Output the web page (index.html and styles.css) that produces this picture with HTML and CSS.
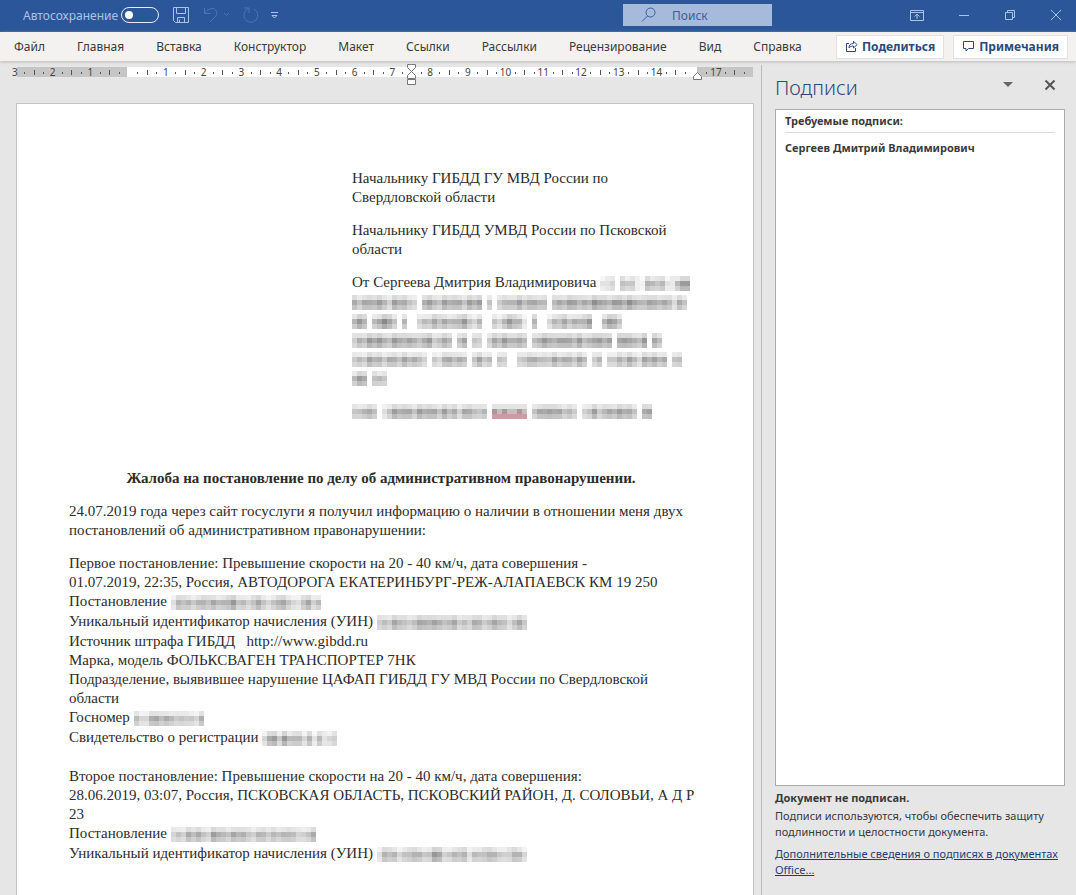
FILE: index.html
```html
<!DOCTYPE html>
<html lang="ru">
<head>
  <meta charset="UTF-8">
  <meta name="viewport" content="width=device-width, initial-scale=1.0">
  <title>Жалоба - Word</title>
  <link rel="stylesheet" href="styles.css">
</head>
<body>
  <header class="titlebar">
    <label class="autosave">Автосохранение <input type="checkbox" class="toggle"></label>
    <div class="quick">
      <button aria-label="Сохранить"><svg width="18" height="18" viewBox="0 0 18 18"><path d="M1.5 1.5h15v15h-13l-2-2zM4.5 1.5v6h9v-6M5.500 16.500v-5h7v5M7.500 16v-2.500"/></svg></button>
      <button class="dim" aria-label="Отменить"><svg width="28" height="18" viewBox="0 0 28 18"><path d="M2.500 2v5.500h6M3 7c3-5 8-5.500 10.500-3 2 2.500 1.500 5-.5 7l-5 5M22 7l2.500 2.500L27 7"/></svg></button>
      <button class="dim" aria-label="Повторить"><svg width="18" height="18" viewBox="0 0 18 18"><path d="M2 2h5v5M6.500 2.500C1 5 .5 12 5 15c4 2.500 9 1 10.500-3.500C16.500 8 15 5 12 3"/></svg></button>
      <button class="more" aria-label="Настройка панели"><svg width="10" height="10" viewBox="0 0 10 10"><path d="M1 2.500h7M2 5.500l2.500 2.500L7 5.500z"/></svg></button>
    </div>
    <label class="search">
      <svg width="18" height="18" viewBox="0 0 18 18"><circle cx="10.500" cy="6.500" r="4.500"/><path d="M7.500 10L2 15.500"/></svg>
      <input type="search" placeholder="Поиск" aria-label="Поиск">
    </label>
    <div class="window-buttons">
      <button aria-label="Параметры ленты"><svg width="14" height="12" viewBox="0 0 14 12"><path d="M.5 1.500h13v10H.5zM.5 3.500h13M7 10V5.500M4.500 7.500L7 5.200l2.500 2.300"/></svg></button>
      <button aria-label="Свернуть"><svg width="12" height="12" viewBox="0 0 12 12"><path d="M1 6.500h10"/></svg></button>
      <button aria-label="Восстановить"><svg width="12" height="12" viewBox="0 0 12 12"><path d="M1.500 3.500h7v7h-7zM3.500 3.500v-2h7v7h-2"/></svg></button>
      <button aria-label="Закрыть"><svg width="12" height="12" viewBox="0 0 12 12"><path d="M1 1l10 10M11 1L1 11"/></svg></button>
    </div>
  </header>

  <nav class="ribbon">
    <div class="tabs">
      <button>Файл</button>
      <button>Главная</button>
      <button>Вставка</button>
      <button>Конструктор</button>
      <button>Макет</button>
      <button>Ссылки</button>
      <button>Рассылки</button>
      <button>Рецензирование</button>
      <button>Вид</button>
      <button>Справка</button>
    </div>
    <div class="actions">
      <button><svg width="13" height="13" viewBox="0 0 13 13"><path d="M4 3.500H1.500v8h9V8M4 8c0-3 1.500-4.500 4.500-4.500V1.200L12 4.700 8.500 8V6C6.500 6 5 6.500 4 8z"/></svg>Поделиться</button>
      <button><svg width="13" height="13" viewBox="0 0 13 13"><path d="M1.500 1.500h10v7h-5L4 11V8.500H1.500z"/></svg>Примечания</button>
    </div>
  </nav>

  <main class="workspace">
    <section class="document">
      <svg class="ruler" id="ruler" width="753" height="24"></svg>
      <article class="page">
        <div class="addressee">
          <p>Начальнику ГИБДД ГУ МВД России по<br>Свердловской области</p>
          <p>Начальнику ГИБДД УМВД России по Псковской<br>области</p>
          <p>От Сергеева Дмитрия Владимировича <span class="mosaic" data-cells="212034301453420566"></span><br>
            <span class="mosaic" data-cells="5465565365543 565465564656 4 3455645654 465664657655765765465564254"></span><br>
            <span class="mosaic" data-cells="564 56754 5  3545365546435  4356452 4  353546546  5654"></span><br>
            <span class="mosaic" data-cells="25465654654653563454 46 32 35465554 4565466546455646 565546 54"></span><br>
            <span class="mosaic" data-cells="354655465465643 4356465 4645 43  34565446565465 35 445465365656 44"></span><br>
            <span class="mosaic" data-cells="565 353"></span></p>
          <p><span class="mosaic" data-cells="34554 246556465564645365435 rstsrsr 465656443 34634656554 56"></span></p>
        </div>
        <h1>Жалоба на постановление по делу об административном правонарушении.</h1>
        <p>24.07.2019 года через сайт госуслуги я получил информацию о наличии в отношении меня двух<br>постановлений об административном правонарушении:</p>
        <div class="ruling">
          <p>Первое постановление: Превышение скорости на 20 - 40 км/ч, дата совершения -<br>01.07.2019, 22:35, Россия, АВТОДОРОГА ЕКАТЕРИНБУРГ-РЕЖ-АЛАПАЕВСК КМ 19 250</p>
          <p class="masked">Постановление <span class="mosaic" data-cells="243545436554645335434454323535"></span></p>
          <p class="masked">Уникальный идентификатор начисления (УИН) <span class="mosaic" data-cells="243543345546534534254345432453"></span></p>
          <p>Источник штрафа ГИБДД &nbsp; http://www.gibdd.ru</p>
          <p>Марка, модель ФОЛЬКСВАГЕН ТРАНСПОРТЕР 7НК</p>
          <p>Подразделение, выявившее нарушение ЦАФАП ГИБДД ГУ МВД России по Свердловской<br>области</p>
          <p class="masked">Госномер <span class="mosaic" data-cells="43356465343435"></span></p>
          <p class="masked">Свидетельство о регистрации <span class="mosaic" data-cells="356465443424132"></span></p>
        </div>
        <div class="ruling">
          <p>Второе постановление: Превышение скорости на 20 - 40 км/ч, дата совершения:<br>28.06.2019, 03:07, Россия, ПСКОВСКАЯ ОБЛАСТЬ, ПСКОВСКИЙ РАЙОН, Д. СОЛОВЬИ, А Д Р<br>23</p>
          <p class="masked">Постановление <span class="mosaic" data-cells="24354543654464533543445442345"></span></p>
          <p class="masked">Уникальный идентификатор начисления (УИН) <span class="mosaic" data-cells="243534345446534534254345432453"></span></p>
        </div>
      </article>
    </section>

    <aside class="pane">
      <div class="pane-head">
        <h2>Подписи</h2>
        <button aria-label="Меню области"><svg width="10" height="6" viewBox="0 0 10 6"><path d="M0 0h10L5 5z" class="solid"/></svg></button>
        <button aria-label="Закрыть область"><svg width="12" height="12" viewBox="0 0 12 12"><path d="M1.500 1.500l9 9M10.500 1.500l-9 9" class="thick"/></svg></button>
      </div>
      <div class="signatures">
        <h3>Требуемые подписи:</h3>
        <p>Сергеев Дмитрий Владимирович</p>
      </div>
      <div class="status">
        <h3>Документ не подписан.</h3>
        <p>Подписи используются, чтобы обеспечить защиту подлинности и целостности документа.</p>
        <a href="#">Дополнительные сведения о подписях в документах Office...</a>
      </div>
    </aside>
  </main>
  <script src="script.js"></script>
</body>
</html>
```
FILE: styles.css
```css
* {
  box-sizing: border-box;
}

body {
  display: flex;
  flex-direction: column;
  height: 100vh;
  margin: 0;
  overflow: hidden;
  background: #e6e6e6;
  color: #3a3a3a;
  font-family: "Noto Sans", "Open Sans", sans-serif;
  font-size: 12px;
}

button {
  padding: 0;
  border: 0;
  background: none;
  color: inherit;
  font: inherit;
}

h1, h2, h3, p {
  margin: 0;
}

svg {
  display: block;
  fill: none;
  stroke: currentColor;
}

/* title bar */
.titlebar {
  display: flex;
  align-items: center;
  flex: none;
  height: 32px;
  padding: 0 14px 2px 23px;
  background: #2b579a;
  color: #a9c4ec;
}

.autosave {
  display: flex;
  align-items: center;
  gap: 3px;
}

.toggle {
  appearance: none;
  display: flex;
  align-items: center;
  width: 38px;
  height: 16px;
  margin: 0;
  padding: 0 3px;
  border: 1px solid #e4eefc;
  border-radius: 8px;
}

.toggle::before {
  content: "";
  width: 8px;
  height: 8px;
  border-radius: 50%;
  background: #fff;
}

.quick {
  display: flex;
  align-items: center;
  gap: 12px;
  margin-left: 13px;
}

.dim {
  color: #4a78bd;
}

.more {
  margin-left: -2px;
}

.search {
  display: flex;
  align-items: center;
  width: 149px;
  height: 22px;
  margin-left: auto;
  padding-left: 17px;
  gap: 14px;
  background: #a6bbdb;
  color: #3a5f9c;
}

.search svg {
  flex: none;
}

.search input {
  width: 80px;
  padding: 0;
  border: 0;
  outline: 0;
  background: none;
  font: inherit;
}

.search input::placeholder {
  color: #3a5f9c;
}

.window-buttons {
  display: flex;
  gap: 34px;
  margin-left: 138px;
}

/* ribbon */
.ribbon {
  display: flex;
  align-items: center;
  justify-content: space-between;
  flex: none;
  height: 29px;
  padding: 0 8px 0 14px;
  background: #f3f2f1;
  box-shadow: 0 1px 3px #bbb;
  z-index: 1;
}

.tabs {
  display: flex;
  gap: 32px;
}

.actions {
  display: flex;
  gap: 9px;
}

.actions button {
  display: flex;
  align-items: center;
  gap: 4px;
  height: 24px;
  padding: 0 8px;
  border: 1px solid #e1e1e1;
  background: #fff;
  color: #2b4a7c;
  font-weight: bold;
}

/* document */
.workspace {
  display: flex;
  flex: 1;
  min-height: 0;
}

.document {
  flex: 1;
  min-width: 0;
  overflow: hidden;
}

.ruler {
  margin-bottom: 18px;
}

.ruler text {
  fill: #444;
  stroke: none;
  font-size: 10px;
  text-anchor: middle;
}

.page {
  height: 100%;
  margin: 0 7px 0 16px;
  padding: 65px 52px 0;
  border: 1px solid #c3c3c3;
  background: #fff;
  color: #2c2c2c;
  font: 15px/19px "Liberation Serif", serif;
  white-space: nowrap;
}

.addressee {
  display: flex;
  flex-direction: column;
  gap: 14px;
  margin-left: 283px;
}

.page h1 {
  margin: 49px 0 14px;
  padding-right: 8px;
  font-size: 15px;
  text-align: center;
}

.ruling {
  margin-top: 14px;
}

.ruling + .ruling {
  margin-top: 20px;
}

.masked {
  margin-bottom: 1px;
}

.mosaic {
  display: inline-block;
  height: 15px;
  vertical-align: -4px;
}

/* signatures pane */
.pane {
  display: flex;
  flex-direction: column;
  flex: none;
  width: 315px;
  margin-top: 4px;
  padding: 10px 11px 17px 13px;
  border-left: 1px solid #bbb;
}

.pane-head {
  display: flex;
  align-items: center;
  gap: 31px;
  height: 34px;
  padding: 0 9px 8px 0;
  color: #555;
}

.pane-head h2 {
  margin-right: auto;
  color: #2b4a7c;
  font: 300 20px/28px "Noto Sans", "Open Sans", sans-serif;
}

.pane-head button {
  margin-bottom: 6px;
}

.solid {
  fill: #666;
  stroke: none;
}

.thick {
  stroke-width: 2;
}

.signatures {
  flex: 1;
  padding: 3px 9px;
  border: 1px solid #ababab;
  background: #fff;
}

.pane h3,
.signatures p {
  font-size: 11px;
  line-height: 16px;
  font-weight: bold;
}

.signatures h3 {
  margin-bottom: 7px;
  padding-bottom: 3px;
  border-bottom: 1px solid #ddd;
}

.status {
  padding-top: 4px;
  font-size: 11px;
  line-height: 16px;
}

.status p {
  margin: 2px 0 6px;
}

.status a {
  color: #1f3f73;
}
```
FILE: script.js
```js
const NS = 'http://www.w3.org/2000/svg';

function add(parent, tag, attrs, text) {
  const el = document.createElementNS(NS, tag);
  Object.entries(attrs).forEach(([key, value]) => el.setAttribute(key, value));
  if (text) el.textContent = text;
  parent.appendChild(el);
  return el;
}

// ruler: one centimetre is CM pixels, zero is at ZERO
const ruler = document.getElementById('ruler');
const CM = 37.75;
const ZERO = 128;

function band(x, width, fill) {
  add(ruler, 'rect', { x, y: 6, width, height: 10, fill, stroke: 'none' });
}

function dot(x) {
  add(ruler, 'rect', { x: Math.round(x), y: 11, width: 1, height: 2, fill: '#555', stroke: 'none' });
}

function tick(x) {
  add(ruler, 'rect', { x: Math.round(x), y: 9, width: 1, height: 5, fill: '#555', stroke: 'none' });
}

band(17, 110, '#c6c6c6');
band(127, 570, '#fff');
band(697, 56, '#c6c6c6');

for (let n = -3; n < 15; n++) {
  const x = ZERO + n * CM;
  if (n !== 0) add(ruler, 'text', { x, y: 15 }, String(Math.abs(n)));
  dot(x + CM / 4);
  tick(x + CM / 2);
  dot(x + CM * 3 / 4);
}
add(ruler, 'text', { x: 716, y: 15 }, '17');
dot(706);
dot(725);
tick(734);
dot(744);

const marker = { fill: '#fff', stroke: '#777' };
add(ruler, 'path', { d: 'M407.500 3.500h8v3l-4 4-4-4zM407.500 17.500v-3l4-4 4 4v3zM407.500 18.500h8v5h-8z', ...marker });
add(ruler, 'path', { d: 'M693.500 18.500v-3l4-4 4 4v3z', ...marker });

// masked personal data: every digit is the darkness of one column
const CELL = 5;

document.querySelectorAll('.mosaic').forEach((el, k) => {
  const cells = el.dataset.cells;
  const svg = add(el, 'svg', { width: cells.length * CELL, height: 15, 'shape-rendering': 'crispEdges' });
  [...cells].forEach((c, i) => {
    if (c === ' ') return;
    for (let row = 0; row < 3; row++) {
      const noise = (i * 7 + row * 5 + k * 3 + i * i) % 5;
      let fill;
      if ('rst'.includes(c)) {
        fill = ['#e4e4e4', noise > 2 ? '#a99' : '#c8bcbc', '#cf9ba0'][row];
      } else {
        const v = 255 - Number(c) * [4, 14, 9][row] - noise * 5;
        fill = `rgb(${v},${v},${v})`;
      }
      add(svg, 'rect', { x: i * CELL, y: row * CELL, width: CELL, height: CELL, fill, stroke: 'none' });
    }
  });
});
```
